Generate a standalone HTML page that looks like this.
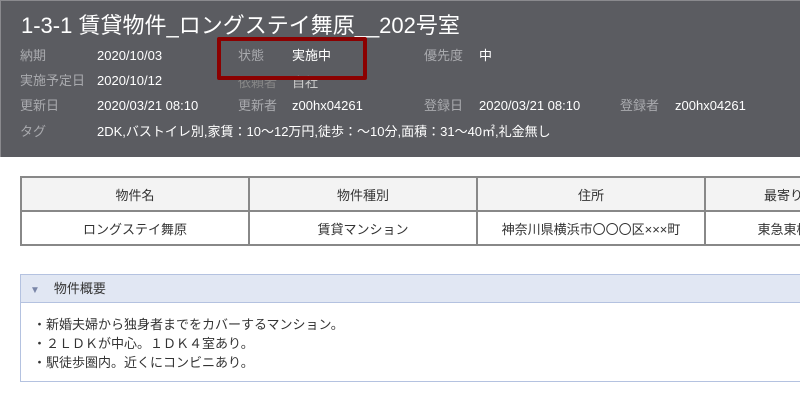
<!DOCTYPE html>
<html><head><meta charset="utf-8"><style>
body{margin:0;width:800px;height:400px;overflow:hidden;background:#fff;font-family:"Liberation Sans","Noto Sans CJK JP",sans-serif;position:relative}
.hd{position:absolute;left:0;top:0;width:800px;height:157px;background:#5b5c61;border-top:1px solid #8a8a8e;border-left:1px solid #8a8a8e;box-sizing:border-box}
.t{position:absolute;white-space:nowrap;line-height:18px}
.title{left:21px;top:13px;font-size:22px;color:#fff;line-height:26px}
.l{font-size:13px;color:#a9aaae}
.v{font-size:13px;color:#fff}
.red{position:absolute;left:217px;top:37px;width:150px;height:43px;border:4px solid #8b0000;box-sizing:border-box;border-radius:2px}
.tw{position:absolute;left:20px;top:176px;width:780px;height:72px;overflow:hidden}
table{border-collapse:collapse;font-size:13px;color:#333;table-layout:fixed;width:854px}
td{border:2px solid #888;height:32px;text-align:center;padding:0;white-space:nowrap;overflow:hidden}
tr.h td{background:#f3f3f3}
.pn{position:absolute;left:20px;top:274px;width:780px;height:108px;border:1px solid #b4c2e0;border-right:none;box-sizing:border-box}
.ph{height:27px;background:#e1e7f3;border-bottom:1px solid #b4c2e0;font-size:13px;color:#333;line-height:27px}
.pb{padding:12px 0 0 12px;font-size:13px;color:#333;line-height:19px}
</style></head><body>
<div class="hd"></div>
<div class="t title">1-3-1 賃貸物件_ロングステイ舞原__202号室</div>
<div class="t l" style="left:20px;top:47px">納期</div><div class="t v" style="left:97px;top:47px">2020/10/03</div>
<div class="t l" style="left:238px;top:47px">状態</div><div class="t v" style="left:292px;top:47px">実施中</div>
<div class="t l" style="left:424px;top:47px">優先度</div><div class="t v" style="left:479px;top:47px">中</div>
<div class="t l" style="left:20px;top:72px">実施予定日</div><div class="t v" style="left:97px;top:72px">2020/10/12</div>
<div class="t l" style="left:238px;top:74px;color:#888">依頼者</div><div class="t v" style="left:292px;top:74px;color:#ccc">自社</div>
<div class="t l" style="left:20px;top:97px">更新日</div><div class="t v" style="left:97px;top:97px">2020/03/21 08:10</div>
<div class="t l" style="left:238px;top:97px">更新者</div><div class="t v" style="left:292px;top:97px">z00hx04261</div>
<div class="t l" style="left:424px;top:97px">登録日</div><div class="t v" style="left:479px;top:97px">2020/03/21 08:10</div>
<div class="t l" style="left:620px;top:97px">登録者</div><div class="t v" style="left:675px;top:97px">z00hx04261</div>
<div class="t l" style="left:20px;top:123px">タグ</div><div class="t v" style="left:97px;top:123px">2DK,バストイレ別,家賃：10〜12万円,徒歩：〜10分,面積：31〜40㎡,礼金無し</div>
<div class="red"></div>
<div class="tw"><table><colgroup><col style="width:228px"><col style="width:228px"><col style="width:228px"><col style="width:170px"></colgroup>
<tr class="h"><td>物件名</td><td>物件種別</td><td>住所</td><td>最寄り駅</td></tr>
<tr><td>ロングステイ舞原</td><td>賃貸マンション</td><td>神奈川県横浜市〇〇〇区×××町</td><td>東急東横線</td></tr></table></div>
<div class="pn"><div class="ph"><span style="color:#7a86a8;font-size:10px;margin:0 14px 0 9px">▼</span>物件概要</div>
<div class="pb">・新婚夫婦から独身者までをカバーするマンション。<br>・２ＬＤＫが中心。１ＤＫ４室あり。<br>・駅徒歩圏内。近くにコンビニあり。</div></div>
</body></html>
